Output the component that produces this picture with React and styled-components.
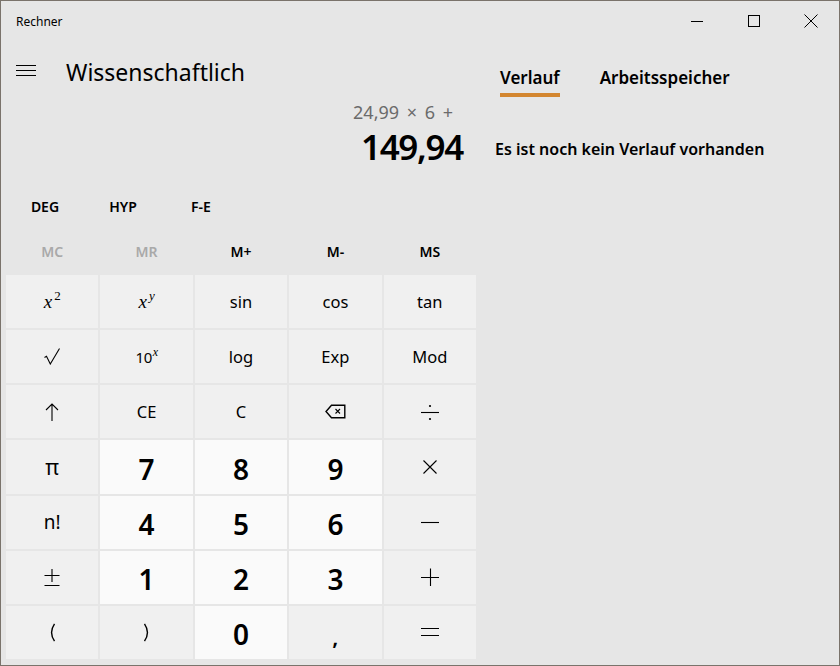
import React from "react";
import styled, { createGlobalStyle } from "styled-components";

const Global = createGlobalStyle`
  html, body { margin: 0; padding: 0; background: #e6e6e6; }
  body { font-family: "Noto Sans", "Open Sans", sans-serif; color: #000; }
  * { box-sizing: border-box; }
`;

const Window = styled.div`
  width: 840px;
  height: 666px;
  border: 1px solid #7a736b;
  background: #e6e6e6;
  display: flex;
  flex-direction: column;
  overflow: hidden;
`;

const TitleBar = styled.div`
  height: 40px;
  flex: none;
  display: flex;
  align-items: center;
  padding-left: 15px;
`;

const TitleText = styled.div`
  font-size: 12px;
  flex: 1;
`;

const CaptionButton = styled.div`
  width: 57px;
  height: 40px;
  display: flex;
  align-items: center;
  justify-content: center;
`;

const Body = styled.div`
  flex: 1;
  display: flex;
  min-height: 0;
`;

const LeftPane = styled.div`
  width: 480px;
  flex: none;
  display: flex;
  flex-direction: column;
  padding: 0 4px 6px 5px;
`;

const Header = styled.div`
  height: 59px;
  flex: none;
  display: flex;
  align-items: center;
  padding-left: 10px;
`;

const Hamburger = styled.div`
  width: 20px;
  height: 11px;
  display: flex;
  flex-direction: column;
  justify-content: space-between;
  margin-right: 30px;
  span { display: block; height: 1px; background: #000; }
`;

const ModeTitle = styled.div`
  font-size: 23px;
  font-weight: 400;
  padding-top: 2px;
`;

const Display = styled.div`
  height: 85px;
  flex: none;
  display: flex;
  flex-direction: column;
  align-items: flex-end;
  padding-right: 14px;
`;

const Expression = styled.div`
  font-size: 18px;
  line-height: 24px;
  color: #6b6b6b;
  padding-right: 10px;
  word-spacing: 3px;
`;

const Result = styled.div`
  font-size: 35px;
  line-height: 44px;
  font-weight: 600;
  margin-top: 1px;
  letter-spacing: -1.3px;
`;

const ModeRow = styled.div`
  height: 43px;
  flex: none;
  display: flex;
  align-items: center;
`;

const ModeButton = styled.div`
  width: 78px;
  text-align: center;
  font-size: 14px;
  font-weight: 600;
`;

const MemoryRow = styled.div`
  height: 47px;
  flex: none;
  width: 470px;
  display: grid;
  grid-template-columns: repeat(5, 1fr);
  gap: 2px;
  align-items: center;
`;

const MemoryButton = styled.div`
  text-align: center;
  font-size: 14px;
  font-weight: 600;
  color: ${(p) => (p.$disabled ? "#a9a9a9" : "#000")};
`;

const Keypad = styled.div`
  flex: 1;
  width: 470px;
  display: grid;
  grid-template-columns: repeat(5, 1fr);
  grid-template-rows: repeat(7, 1fr);
  gap: 2px;
`;

const Key = styled.div`
  background: ${(p) => (p.$num ? "#fafafa" : "#f0f0f0")};
  display: flex;
  align-items: center;
  justify-content: center;
  font-size: ${(p) => (p.$num ? "28px" : p.$size || "16.5px")};
  font-weight: ${(p) => (p.$num ? 600 : 400)};
  padding-top: ${(p) => (p.$num ? "4px" : "0")};
  color: #000;
`;

const MathX = styled.span`
  font-family: "Liberation Serif", "DejaVu Serif", serif;
  font-style: italic;
  font-size: 19px;
  sup {
    font-size: 13px;
    vertical-align: 0;
    position: relative;
    top: -8px;
    margin-left: 2px;
  }
`;

const Ten = styled.span`
  font-size: 15px;
  letter-spacing: -0.5px;
  sup {
    font-family: "Liberation Serif", serif;
    font-style: italic;
    font-size: 12px;
    vertical-align: 0;
    position: relative;
    top: -7px;
    margin-left: 1px;
  }
`;

const Comma = styled.span`
  font-size: 22px;
  font-weight: 600;
  position: relative;
  top: 4px;
`;

const RightPane = styled.div`
  flex: 1;
  display: flex;
  flex-direction: column;
  padding-left: 14px;
`;

const TabBar = styled.div`
  display: flex;
  gap: 40px;
  padding: 25px 0 0 5px;
`;

const Tab = styled.div`
  display: flex;
  flex-direction: column;
  font-size: 17px;
  line-height: 24px;
  font-weight: 600;
  &::after {
    content: "";
    display: block;
    height: 4px;
    margin-top: 3px;
    background: ${(p) => (p.$active ? "#d3862f" : "transparent")};
  }
`;

const EmptyNote = styled.div`
  margin-top: 41px;
  font-size: 16px;
  line-height: 22px;
  font-weight: 600;
`;

const Stroke = ({ children, w = 20, h = 20, sw = 1.1 }) => (
  <svg width={w} height={h} viewBox={`0 0 ${w} ${h}`} fill="none" stroke="#000" strokeWidth={sw}>
    {children}
  </svg>
);

const icons = {
  times: (
    <Stroke w={18} h={18}>
      <path d="M2.5 2.5 L15.5 15.5 M15.5 2.5 L2.5 15.5" />
    </Stroke>
  ),
  minus: (
    <Stroke w={18} h={18}>
      <path d="M0 9.5 H18" />
    </Stroke>
  ),
  plus: (
    <Stroke w={18} h={18}>
      <path d="M0 9.5 H18 M9.5 0.5 V18" />
    </Stroke>
  ),
  equals: (
    <Stroke w={18} h={18}>
      <path d="M0 5.5 H18 M0 12.5 H18" />
    </Stroke>
  ),
  divide: (
    <svg width="18" height="18" viewBox="0 0 18 18">
      <path d="M0 9.5 H18" stroke="#000" strokeWidth="1.1" />
      <circle cx="9" cy="3" r="1.1" fill="#000" />
      <circle cx="9" cy="16" r="1.1" fill="#000" />
    </svg>
  ),
  back: (
    <svg width="21" height="15" viewBox="0 0 21 15" fill="none" stroke="#000" strokeWidth="1.4">
      <path d="M6.5 1.2 H19.8 V13.8 H6.5 L1 7.5 Z" strokeLinejoin="miter" />
      <path d="M10.5 5 L15 9.5 M15 5 L10.5 9.5" strokeWidth="1.1" />
    </svg>
  ),
  up: (
    <Stroke w={14} h={18}>
      <path d="M7 1 V18 M1 7 L7 1 L13 7" />
    </Stroke>
  ),
  sqrt: (
    <Stroke w={16} h={17}>
      <path d="M0.5 9.5 L2.5 8.3 L6.3 16 L15.5 0.5" strokeLinejoin="miter" />
    </Stroke>
  ),
  plusMinus: (
    <Stroke w={16} h={18}>
      <path d="M0.5 7.5 H15.5 M8 1 V14 M0.5 17.5 H15.5" />
    </Stroke>
  ),
  lparen: (
    <Stroke w={8} h={19} sw={1.4}>
      <path d="M6.5 0.8 Q0.6 9.5 6.5 18.2" />
    </Stroke>
  ),
  rparen: (
    <Stroke w={8} h={19} sw={1.4}>
      <path d="M1.5 0.8 Q7.4 9.5 1.5 18.2" />
    </Stroke>
  ),
};

const keys = [
  [{ c: <MathX>x<sup style={{ fontStyle: "normal" }}>2</sup></MathX> }, { c: <MathX>x<sup>y</sup></MathX> }, { c: "sin" }, { c: "cos" }, { c: "tan" }],
  [{ c: icons.sqrt }, { c: <Ten>10<sup>x</sup></Ten> }, { c: "log" }, { c: "Exp" }, { c: "Mod" }],
  [{ c: icons.up }, { c: "CE" }, { c: "C" }, { c: icons.back }, { c: icons.divide }],
  [{ c: "π", s: "21px" }, { c: "7", n: true }, { c: "8", n: true }, { c: "9", n: true }, { c: icons.times }],
  [{ c: "n!", s: "19px" }, { c: "4", n: true }, { c: "5", n: true }, { c: "6", n: true }, { c: icons.minus }],
  [{ c: icons.plusMinus }, { c: "1", n: true }, { c: "2", n: true }, { c: "3", n: true }, { c: icons.plus }],
  [{ c: icons.lparen }, { c: icons.rparen }, { c: "0", n: true }, { c: <Comma>,</Comma> }, { c: icons.equals }],
];

export default function App() {
  return (
    <>
      <Global />
      <Window>
        <TitleBar>
          <TitleText>Rechner</TitleText>
          <CaptionButton>
            <svg width="12" height="12" viewBox="0 0 12 12"><path d="M0 6.5 H12" stroke="#000" strokeWidth="1" /></svg>
          </CaptionButton>
          <CaptionButton>
            <svg width="12" height="12" viewBox="0 0 12 12"><rect x="0.5" y="0.5" width="11" height="11" fill="none" stroke="#000" strokeWidth="1" /></svg>
          </CaptionButton>
          <CaptionButton>
            <svg width="14" height="14" viewBox="0 0 14 14"><path d="M0.5 0.5 L13.5 13.5 M13.5 0.5 L0.5 13.5" stroke="#000" strokeWidth="1" /></svg>
          </CaptionButton>
        </TitleBar>
        <Body>
          <LeftPane>
            <Header>
              <Hamburger><span /><span /><span /></Hamburger>
              <ModeTitle>Wissenschaftlich</ModeTitle>
            </Header>
            <Display>
              <Expression>24,99 × 6 +</Expression>
              <Result>149,94</Result>
            </Display>
            <ModeRow>
              <ModeButton>DEG</ModeButton>
              <ModeButton>HYP</ModeButton>
              <ModeButton>F-E</ModeButton>
            </ModeRow>
            <MemoryRow>
              <MemoryButton $disabled>MC</MemoryButton>
              <MemoryButton $disabled>MR</MemoryButton>
              <MemoryButton>M+</MemoryButton>
              <MemoryButton>M-</MemoryButton>
              <MemoryButton>MS</MemoryButton>
            </MemoryRow>
            <Keypad>
              {keys.flat().map((k, i) => (
                <Key key={i} $num={k.n} $size={k.s}>{k.c}</Key>
              ))}
            </Keypad>
          </LeftPane>
          <RightPane>
            <TabBar>
              <Tab $active>Verlauf</Tab>
              <Tab>Arbeitsspeicher</Tab>
            </TabBar>
            <EmptyNote>Es ist noch kein Verlauf vorhanden</EmptyNote>
          </RightPane>
        </Body>
      </Window>
    </>
  );
}
